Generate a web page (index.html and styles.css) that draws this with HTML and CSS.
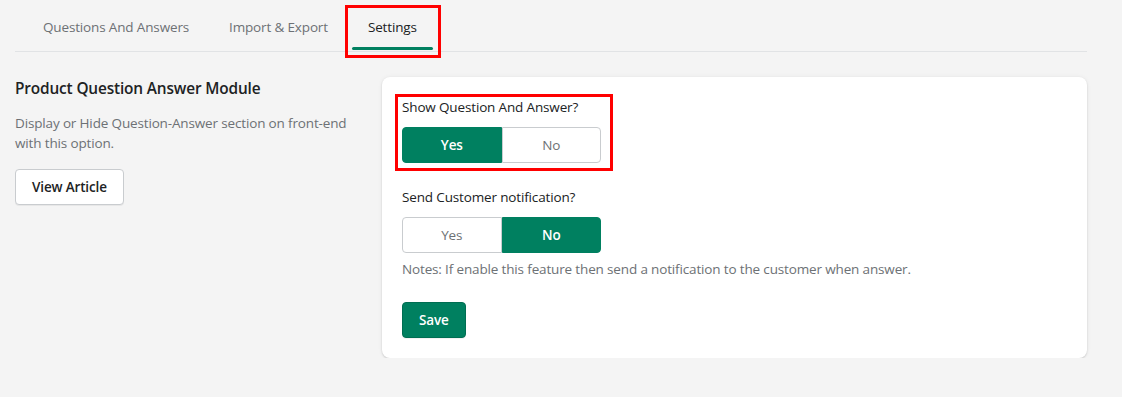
FILE: index.html
```html
<!DOCTYPE html>
<html lang="en">
<head>
    <meta charset="UTF-8">
    <meta name="viewport" content="width=device-width, initial-scale=1.0">
    <title>Product Question Answer - Settings</title>
    <link rel="stylesheet" href="styles.css">
</head>
<body>
    <div class="page">
        <div class="tabs">
            <button class="tab">Questions And Answers</button>
            <button class="tab">Import &amp; Export</button>
            <button class="tab tab-active marked">Settings</button>
        </div>

        <div class="layout">
            <div class="layout-info">
                <h2>Product Question Answer Module</h2>
                <p>Display or Hide Question-Answer section on front-end with this option.</p>
                <button class="btn">View Article</button>
            </div>

            <div class="card">
                <div class="field marked-field">
                    <div class="label">Show Question And Answer?</div>
                    <div class="segmented">
                        <button class="seg seg-on">Yes</button>
                        <button class="seg">No</button>
                    </div>
                </div>

                <div class="field field-second">
                    <div class="label">Send Customer notification?</div>
                    <div class="segmented">
                        <button class="seg">Yes</button>
                        <button class="seg seg-on">No</button>
                    </div>
                    <div class="help">Notes: If enable this feature then send a notification to the customer when answer.</div>
                </div>

                <button class="btn btn-primary">Save</button>
            </div>
        </div>
    </div>
</body>
</html>
```

FILE: styles.css
```css
body {
    font-family: 'Open Sans', 'Noto Sans', sans-serif;
    background-color: #f4f4f4;
    color: #202223;
    margin: 0;
    padding: 0;
    font-size: 13.5px;
    letter-spacing: -0.15px;
    line-height: 20px;
}

button {
    font-family: inherit;
    letter-spacing: inherit;
}

.page {
    width: 1072px;
    padding: 0 15px;
}

/* Tabs */
.tabs {
    display: flex;
    height: 51px;
    border-bottom: 1px solid #e1e3e5;
    padding-left: 8px;
}

.tab {
    position: relative;
    background: none;
    border: none;
    padding: 2px 20px 0;
    height: 51px;
    font-size: 13.5px;
    color: #6d7175;
    cursor: pointer;
}

.tab-active {
    color: #202223;
}

.tab-active::before {
    content: "";
    position: absolute;
    left: 4px;
    right: 4px;
    bottom: 1px;
    height: 3px;
    border-radius: 2px;
    background-color: #008060;
}

/* red annotation boxes */
.marked::after {
    content: "";
    position: absolute;
    left: -3px;
    right: -4px;
    top: 5px;
    bottom: -7px;
    border: 3px solid #f00;
}

.marked-field {
    position: relative;
}

.marked-field::after {
    content: "";
    position: absolute;
    left: -7px;
    right: -12px;
    top: -3px;
    bottom: -8px;
    border: 3px solid #f00;
}

/* Layout */
.layout {
    display: flex;
    gap: 20px;
    margin-top: 25px;
}

.layout-info {
    width: 347px;
    flex-shrink: 0;
}

.layout-info h2 {
    font-size: 15.4px;
    font-weight: 600;
    line-height: 24px;
    margin: 0;
}

.layout-info p {
    color: #6d7175;
    margin: 12px 0 16px;
}

.card {
    flex: 1;
    background: #fff;
    border-radius: 8px;
    box-shadow: 0 0 5px rgba(23, 24, 24, 0.05), 0 1px 2px rgba(0, 0, 0, 0.15);
    padding: 20px;
}

.field {
    display: inline-block;
}

.field-second {
    display: block;
    margin-top: 24px;
}

.label {
    margin-bottom: 10px;
    font-weight: 500;
}

.segmented {
    display: flex;
    width: 199px;
}

.seg {
    flex: 1;
    height: 36px;
    background: #fff;
    border: 1px solid #c9cccf;
    color: #6d7175;
    font-size: 13.5px;
    cursor: pointer;
}

.seg:first-child {
    border-radius: 4px 0 0 4px;
}

.seg:last-child {
    border-radius: 0 4px 4px 0;
}

.seg-on {
    background-color: #008060;
    border-color: #008060;
    color: #fff;
    font-weight: 600;
}

.help {
    color: #6d7175;
    margin-top: 6px;
}

.btn {
    height: 36px;
    padding: 0 16px;
    background: #fff;
    border: 1px solid #c9cccf;
    border-radius: 4px;
    box-shadow: 0 1px 0 rgba(0, 0, 0, 0.05);
    font-size: 13.5px;
    font-weight: 600;
    color: #202223;
    cursor: pointer;
}

.btn-primary {
    margin-top: 23px;
    background-color: #008060;
    border-color: #006e52;
    color: #fff;
}
```
